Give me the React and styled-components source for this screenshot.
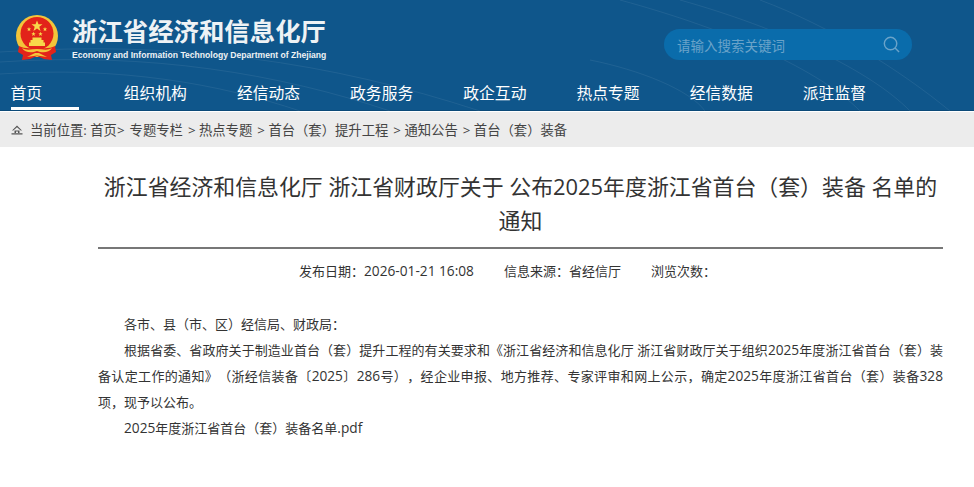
import styled, { createGlobalStyle } from 'styled-components';

const NavItems = ['首页', '组织机构', '经信动态', '政务服务', '政企互动', '热点专题', '经信数据', '派驻监督'];
const Crumbs = ['专题专栏', '热点专题', '首台（套）提升工程', '通知公告', '首台（套）装备'];
const SmallStars = [[14, 14.3], [30, 14.3], [18.5, 19], [25.5, 19]];
const StarPath = 'M0-5.5l1.500 3.800h4l-3.200 2.500 1.200 4.200-3.500-2.600-3.500 2.600 1.200-4.200-3.200-2.500h4z';

const GlobalStyle = createGlobalStyle`
    html, body {
        margin: 0;
        padding: 0;
        background: #fff;
        font-family: "Open Sans", "Noto Sans CJK SC", sans-serif;
        color: #333;
        text-spacing-trim: space-all;
    }
`;

function Emblem() {
    return (
        <EmblemSvg viewBox="0 0 44 48" xmlns="http://www.w3.org/2000/svg">
            <circle cx="22" cy="21" r="21" fill="#f3c53a" />
            <circle cx="22" cy="18.500" r="16.500" fill="#e2231a" />
            <path d={StarPath} transform="translate(22 11)" fill="#f8d84a" />
            {SmallStars.map(([x, y]) => (
                <path key={x} d={StarPath} transform={`translate(${x} ${y}) scale(.4)`} fill="#f8d84a" />
            ))}
            <path d="M14 27.500h16V31H14zM15.500 25h13v2.500h-13zM17.500 22.500h9V25h-9z" fill="#f8d84a" />
            <path d="M4 31c5 3 11 2 18 2s13 1 18-2l1 6-5 3 1 5-8-1-7-3-7 3-8 1 1-5-5-3z" fill="#e2231a" />
            <path d="M7 33c5 3 10 1 15 1s10 2 15-1c-3 5-10 5-15 3-5 2-12 2-15-3zM12 42l8-4h4l8 4-10-1.500z" fill="#f3c53a" />
        </EmblemSvg>
    );
}

function SearchIcon() {
    return (
        <SearchSvg viewBox="0 0 18 18" xmlns="http://www.w3.org/2000/svg">
            <circle cx="8" cy="8" r="6.6" />
            <path d="M12.8 12.800L17 17" />
        </SearchSvg>
    );
}

function HomeIcon() {
    return (
        <HomeSvg viewBox="0 0 12 10" xmlns="http://www.w3.org/2000/svg">
            <path d="M6 .5l5 5H9.700L6 2.200 2.300 5.500H1zM3.500 5.500h5V8H7V6.500H5V8H3.500zM.5 8.300h11v1.200H.5z" />
        </HomeSvg>
    );
}

export default function App() {
    return (
        <Page>
            <GlobalStyle />
            <Header>
                <Arcs viewBox="0 0 974 111" preserveAspectRatio="none" xmlns="http://www.w3.org/2000/svg">
                    <path d="M0 52C180 40 330 62 480 111M0 62C150 52 280 74 390 111M0 74C120 66 220 84 300 111" />
                    <path d="M620 0C730 30 820 70 860 111M680 0C780 28 870 70 910 111M760 0C830 26 900 70 950 111M590 60C640 70 690 90 705 111" />
                </Arcs>
                <TopRow>
                    <Brand>
                        <Emblem />
                        <BrandText>
                            <BrandName>浙江省经济和信息化厅</BrandName>
                            <BrandEnglish>Economy and Information Technology Department of Zhejiang</BrandEnglish>
                        </BrandText>
                    </Brand>
                    <SearchBox>
                        <SearchHint>请输入搜索关键词</SearchHint>
                        <SearchIcon />
                    </SearchBox>
                </TopRow>
                <Nav>
                    {NavItems.map((item, i) => (
                        <NavItem key={item}>
                            <NavLabel $active={i === 0}>{item}</NavLabel>
                        </NavItem>
                    ))}
                </Nav>
            </Header>
            <Breadcrumb>
                <HomeIcon />
                <span>当前位置: 首页&gt;</span>
                {Crumbs.map((c, i) => (
                    <span key={c}>{i > 0 && '> '}{c}</span>
                ))}
            </Breadcrumb>
            <Article>
                <Title>浙江省经济和信息化厅 浙江省财政厅关于 公布2025年度浙江省首台（套）装备 名单的通知</Title>
                <Meta>
                    <span>发布日期：<Num>2026-01-21 16:08</Num></span>
                    <span>信息来源：省经信厅</span>
                    <span>浏览次数：</span>
                </Meta>
                <Body>
                    <p>各市、县（市、区）经信局、财政局：</p>
                    <p>根据省委、省政府关于制造业首台（套）提升工程的有关要求和《浙江省经济和信息化厅 浙江省财政厅关于组织<Num>2025</Num>年度浙江省首台（套）装备认定工作的通知》（浙经信装备〔<Num>2025</Num>〕<Num>286</Num>号），经企业申报、地方推荐、专家评审和网上公示，确定<Num>2025</Num>年度浙江省首台（套）装备<Num>328</Num>项，现予以公布。</p>
                    <p><Num>2025</Num>年度浙江省首台（套）装备名单<Num>.pdf</Num></p>
                </Body>
            </Article>
        </Page>
    );
}

const Page = styled.div`
    width: 974px;
    height: 487px;
    overflow: hidden;
    background: #fff;
`;

const Header = styled.header`
    position: relative;
    height: 111px;
    background: #0f568b;
    border-bottom: 1px solid #fff;
    box-shadow: inset 0 -1px 0 #0b4a78;
`;

const Arcs = styled.svg`
    position: absolute;
    inset: 0;
    width: 100%;
    height: 100%;
    fill: none;
    stroke: rgba(255, 255, 255, 0.07);
    stroke-width: 1;
`;

const TopRow = styled.div`
    position: relative;
    height: 80px;
    display: flex;
    justify-content: space-between;
    padding: 15px 62px 0 15px;
    box-sizing: border-box;
`;

const Brand = styled.div`
    display: flex;
    gap: 13px;
`;

const EmblemSvg = styled.svg`
    width: 44px;
    height: 48px;
`;

const BrandText = styled.div`
    display: flex;
    flex-direction: column;
    color: #eef2f5;
`;

const BrandName = styled.div`
    font-size: 25.4px;
    line-height: 33px;
    padding-bottom: 1px;
    font-weight: 700;
    white-space: nowrap;
`;

const BrandEnglish = styled.div`
    font-family: "Liberation Sans", sans-serif;
    font-size: 8.6px;
    font-weight: 700;
    line-height: 12px;
    white-space: nowrap;
`;

const SearchBox = styled.div`
    width: 248px;
    height: 31px;
    margin-top: 14px;
    padding: 0 12px 0 13px;
    box-sizing: border-box;
    display: flex;
    align-items: center;
    justify-content: space-between;
    background: #0a6cab;
    border-radius: 16px;
`;

const SearchHint = styled.span`
    font-size: 13.500px;
    color: #6aa3c9;
`;

const SearchSvg = styled.svg`
    width: 17px;
    height: 17px;
    fill: none;
    stroke: #6aa3c9;
    stroke-width: 1.500;
`;

const Nav = styled.nav`
    position: relative;
    display: flex;
    padding-left: 10.500px;
`;

const NavItem = styled.div`
    width: 113.200px;
`;

const NavLabel = styled.span`
    display: inline-block;
    min-width: 68px;
    height: 30px;
    line-height: 26px;
    font-size: 15.800px;
    color: #fff;
    box-sizing: border-box;
    border-bottom: 3px solid ${(props) => (props.$active ? '#fff' : 'transparent')};
`;

const Breadcrumb = styled.div`
    height: 35px;
    background: #ececec;
    display: flex;
    align-items: center;
    gap: 5px;
    padding-left: 11px;
    font-size: 13.330px;
    color: #444;
`;

const HomeSvg = styled.svg`
    width: 12px;
    height: 10px;
    margin-right: 2px;
    fill: #555;
`;

const Article = styled.main`
    margin: 0 31px 0 98px;
`;

const Title = styled.h1`
    margin: 0;
    padding: 23px 0 9px;
    font-size: 21.900px;
    line-height: 34px;
    font-weight: 400;
    text-align: center;
    color: #333;
    border-bottom: 2px solid #777;
`;

const Meta = styled.div`
    display: flex;
    justify-content: center;
    gap: 30px;
    margin-top: 12px;
    padding-right: 26px;
    font-size: 13px;
    line-height: 20px;
`;

const Num = styled.span`
    font-size: 13.700px;
`;

const Body = styled.div`
    margin-top: 30px;
    font-size: 13px;
    line-height: 26px;
    text-align: justify;

    p {
        margin: 0;
        text-indent: 26px;
    }
`;
